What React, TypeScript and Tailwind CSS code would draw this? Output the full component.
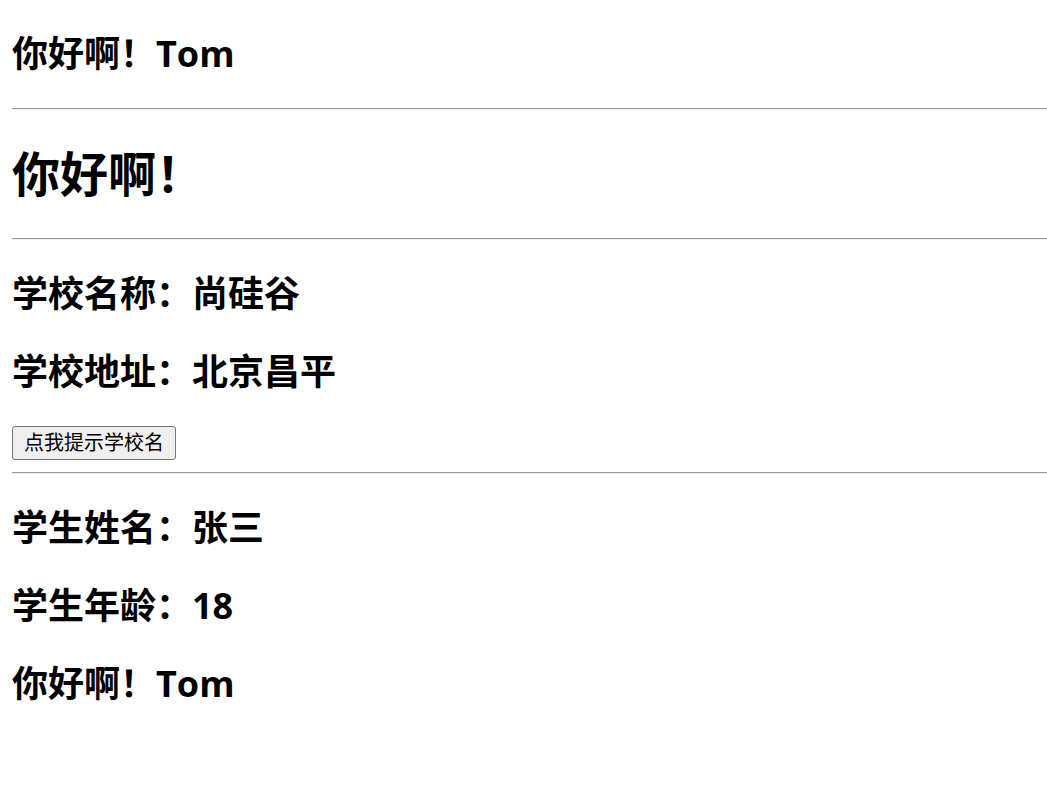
const font = {
  fontFamily: '"Open Sans", "Noto Sans CJK SC", sans-serif',
};

function Title({ children }: { children: React.ReactNode }) {
  return (
    <h2 className="mt-[30px] text-[36px] leading-[48px] font-bold text-black whitespace-nowrap">
      {children}
    </h2>
  );
}

function Rule({ className = "" }: { className?: string }) {
  return (
    <hr className={`h-0 border-t border-b border-t-[#9a9a9a] border-b-[#eeeeee] ${className}`} />
  );
}

export default function App() {
  return (
    <div className="min-h-[788px] w-full bg-white pl-[12px] flex flex-col" style={font}>
      <Title>你好啊！Tom</Title>
      <Rule className="mt-[30px]" />
      <h1 className="mt-[32px] text-[48px] leading-[63px] font-bold text-black">你好啊！</h1>
      <Rule className="mt-[33px]" />

      <Title>学校名称：尚硅谷</Title>
      <Title>学校地址：北京昌平</Title>
      <div className="mt-[30px]">
        <button className="h-[34px] w-[164px] rounded-[3px] border border-[#767676] bg-[#efefef] text-[20px] leading-none text-black">
          点我提示学校名
        </button>
      </div>
      <Rule className="mt-[12px]" />

      <Title>学生姓名：张三</Title>
      <Title>学生年龄：18</Title>
      <Title>你好啊！Tom</Title>
    </div>
  );
}
